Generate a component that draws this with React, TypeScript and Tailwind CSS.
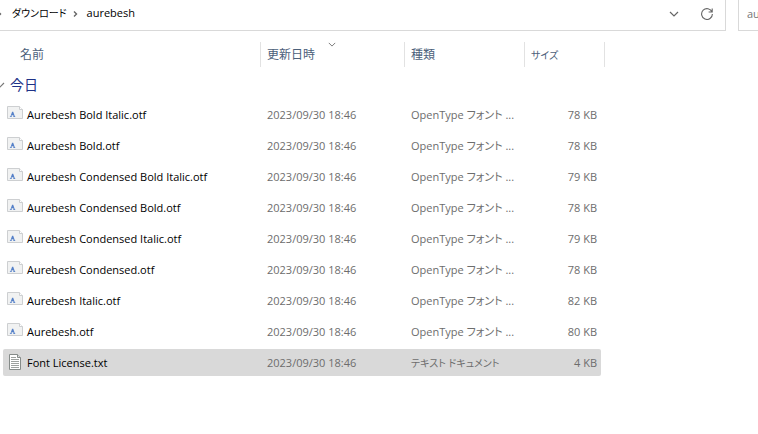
const files = [
  { name: 'Aurebesh Bold Italic.otf', type: 'OpenType フォント ...', size: '78 KB' },
  { name: 'Aurebesh Bold.otf', type: 'OpenType フォント ...', size: '78 KB' },
  { name: 'Aurebesh Condensed Bold Italic.otf', type: 'OpenType フォント ...', size: '79 KB' },
  { name: 'Aurebesh Condensed Bold.otf', type: 'OpenType フォント ...', size: '78 KB' },
  { name: 'Aurebesh Condensed Italic.otf', type: 'OpenType フォント ...', size: '79 KB' },
  { name: 'Aurebesh Condensed.otf', type: 'OpenType フォント ...', size: '78 KB' },
  { name: 'Aurebesh Italic.otf', type: 'OpenType フォント ...', size: '82 KB' },
  { name: 'Aurebesh.otf', type: 'OpenType フォント ...', size: '80 KB' },
  { name: 'Font License.txt', type: 'テキスト ドキュメント', size: '4 KB', selected: true },
]

function Chevron({ className }: { className: string }) {
  return (
    <svg viewBox="0 0 10 6" fill="none" stroke="currentColor" strokeWidth="1.2" className={className}>
      <path d="M1 1l4 4 4-4" />
    </svg>
  )
}

function Crumb() {
  return (
    <svg viewBox="0 0 5 8" fill="none" stroke="#666" strokeWidth="1.4" className="h-2 w-[5px] shrink-0">
      <path d="M1 1.5L3.5 4 1 6.5" />
    </svg>
  )
}

function FontIcon() {
  return (
    <svg viewBox="0 0 16 13" className="mb-[6px] h-[13px] w-4 shrink-0">
      <path d="M.5.5h12l3 3v9H.5z" fill="#f1f2f2" stroke="#cdcfd1" />
      <path d="M12.5.5v3h3" fill="#fff" stroke="#cdcfd1" />
      <path d="M2.8 11l.1-.6.6-.2 1.6-4.4h1.1l1.6 4.4.5.2v.6H6.2v-.6l.4-.2-.3-.9H4.7l-.3.9.5.2-.1.6z" fill="#5580c8" />
    </svg>
  )
}

function TextIcon() {
  return (
    <svg viewBox="0 0 16 16" className="mb-[3px] size-4 shrink-0">
      <path d="M2.5.5h8l3 3v12h-11z" fill="#fff" stroke="#858b89" />
      <path d="M10.5.5v3h3" fill="#dde0df" stroke="#858b89" />
      <path d="M4 3.5h5M4 5.5h8M4 7.5h8M4 9.5h8M4 11.5h8M4 13.5h8" stroke="#9da19f" />
    </svg>
  )
}

export default function App() {
  return (
    <main className="min-h-screen overflow-hidden bg-white font-['Open_Sans','Noto_Sans_CJK_JP',sans-serif] text-[11px] text-black">
      <div className="flex h-[31px]">
        <nav className="flex min-w-0 flex-1 items-center border-r border-b border-[#d9d9d9] pr-3 pb-[3px]">
          <div className="-ml-[3px] flex flex-1 items-center">
            <Crumb />
            <a href="#downloads" className="ml-[10px] text-[10px] [font-feature-settings:'palt']">ダウンロード</a>
            <div className="mr-[9px] ml-[6px] flex">
              <Crumb />
            </div>
            <a href="#aurebesh">aurebesh</a>
          </div>
          <button aria-label="履歴" className="mr-[22px] text-[#666]">
            <Chevron className="h-[6px] w-[10px]" />
          </button>
          <button aria-label="更新" className="text-[#666]">
            <svg viewBox="0 0 12 12" fill="none" stroke="currentColor" strokeWidth="1.1" className="size-3">
              <path d="M11 4A5.4 5.4 0 1 0 11.4 6M11.2.5V4H7.6" />
            </svg>
          </button>
        </nav>
        <input
          aria-label="検索"
          defaultValue="aurebeshの検索"
          className="ml-3 w-5 border-b border-l border-[#d9d9d9] pb-[2px] pl-2 text-[#767676] outline-none"
        />
      </div>

      <table className="mt-[7px] ml-[3px] w-[602px] table-fixed border-separate border-spacing-x-0 border-spacing-y-1 text-left">
        <colgroup>
          <col className="w-[258px]" />
          <col className="w-36" />
          <col className="w-[120px]" />
          <col className="w-[76px]" />
          <col className="w-1" />
        </colgroup>
        <thead className="text-xs text-[#4c607a]">
          <tr className="h-[25px]">
            <th className="border-r border-[#e2e2e2] p-0 pl-[17px] font-normal">
              <button>名前</button>
            </th>
            <th className="relative border-r border-[#e2e2e2] p-0 pl-[6px] font-normal">
              <button>更新日時</button>
              <Chevron className="absolute top-0 left-[67px] h-[5px] w-2 text-[#777]" />
            </th>
            <th className="border-r border-[#e2e2e2] p-0 pl-[6px] font-normal">
              <button>種類</button>
            </th>
            <th colSpan={2} className="border-r border-[#e2e2e2] p-0 pl-[6px] font-normal">
              <button className="text-[10px] [font-feature-settings:'palt']">サイズ</button>
            </th>
          </tr>
        </thead>
        <tbody>
          <tr className="h-[26px]">
            <th colSpan={5} className="p-0 pt-[2px] font-normal">
              <button className="-ml-[8px] flex items-center gap-[5px] text-sm leading-5 text-[#1e3287]">
                <Chevron className="h-[6px] w-[10px] text-[#777]" />
                今日
              </button>
            </th>
          </tr>
          {files.map((file) => (
            <tr key={file.name} className={file.selected ? 'h-[27px] bg-[#d9d9d9]' : 'h-[27px]'}>
              <td className="rounded-l-xs p-0 pt-[2px] pl-1">
                <div className="flex items-center gap-1">
                  {file.selected ? <TextIcon /> : <FontIcon />}
                  <span className="whitespace-nowrap">{file.name}</span>
                </div>
              </td>
              <td className="p-0 pt-[2px] pl-[6px] text-[#6d6d6d]">2023/09/30 18:46</td>
              <td
                className={`p-0 pt-[2px] pl-[6px] whitespace-nowrap text-[#6d6d6d] [font-feature-settings:'palt'] ${file.selected ? 'text-[10px]' : ''}`}
              >
                {file.type}
              </td>
              <td className="rounded-r-xs p-0 pt-[2px] pr-1 text-right text-[#6d6d6d]">{file.size}</td>
            </tr>
          ))}
        </tbody>
      </table>
    </main>
  )
}
